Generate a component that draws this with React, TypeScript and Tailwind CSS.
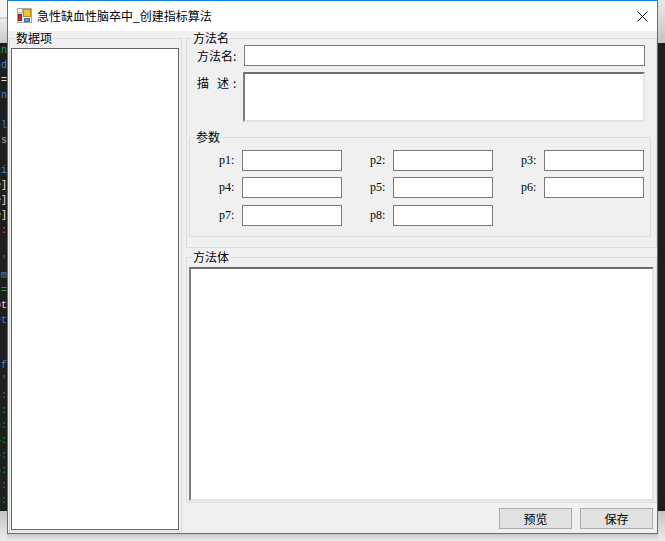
const uiFont = "font-['Noto_Sans_CJK_SC',sans-serif]";

const codeRows: [string, string][] = [
  ["in", "text-[#2ea043]"], ["d", "text-[#3f7fe0]"], ["=", "text-[#e0e0e0]"], ["n", "text-[#3f7fe0]"], ["", ""],
  ["l", "text-[#3f7fe0]"], ["s", "text-[#b5b08a]"], ["", ""], ["i", "text-[#3f7fe0]"], ["e]", "text-[#e0e0e0]"],
  ["e]", "text-[#e0e0e0]"], ["e]", "text-[#e0e0e0]"], [":", "text-[#c9701e]"], ["", ""], ["'", "text-[#2ea043]"],
  ["em", "text-[#3f7fe0]"], ["=", "text-[#2ea043]"], ["ot", "text-[#e0e0e0]"], ["et", "text-[#3f7fe0]"], ["", ""],
  ["", ""], ["rf", "text-[#3f7fe0]"], ["'", "text-[#2ea043]"], ["1:", "text-[#16a016]"], ["2:", "text-[#16a016]"],
  ["3:", "text-[#16a016]"], ["4:", "text-[#16a016]"], ["5:", "text-[#16a016]"], ["6:", "text-[#16a016]"], ["7:", "text-[#16a016]"],
  ["8:", "text-[#16a016]"],
];

const params = [
  ["p1:", "p2:", "p3:"],
  ["p4:", "p5:", "p6:"],
  ["p7:", "p8:"],
];

function AppIcon() {
  return (
    <svg width="16" height="16" viewBox="0 0 16 16" className="block">
      <rect x="0.5" y="0.5" width="14" height="14" fill="#f4f4f4" stroke="#a9a9a9" />
      <path d="M5.5 0.5V5M0.5 5H5.5M0.5 10H3" stroke="#a9a9a9" fill="none" />
      <rect x="6.5" y="1.5" width="7" height="7" fill="#f2c230" stroke="#b98a1c" />
      <rect x="1.5" y="6.5" width="3" height="6" fill="#d8262c" stroke="#8c1a1e" />
      <rect x="7.5" y="10.5" width="5" height="3" fill="#5b9be6" stroke="#3d6fb0" />
    </svg>
  );
}

function GroupBox({ title, className, children }: { title: string; className: string; children?: React.ReactNode }) {
  return (
    <div className={`relative border border-[#dcdcdc] ${className}`}>
      <span className="absolute -top-[8px] left-[5px] bg-[#f0f0f0] px-[1px] text-[12px] leading-[14px] text-black">
        {title}
      </span>
      {children}
    </div>
  );
}

export default function App() {
  return (
    <div className={`flex h-[541px] w-[665px] overflow-hidden bg-[#e6e6e6] ${uiFont}`}>
      {/* Editor behind the dialog, left */}
      <div className="flex w-[7px] shrink-0 flex-col">
        <div className="h-[19px] border-b-2 border-[#d2d2d2] bg-[#f5f5f5]" />
        <div className="h-[24px] bg-gradient-to-b from-[#ececec] to-[#c8c8c8]" />
        <div className="h-[468px] bg-[#1e1e1e]">
          {codeRows.map(([code, color], i) => (
            <div
              key={i}
              className={`flex h-[15px] w-[7px] justify-end overflow-hidden font-['Liberation_Mono',monospace] text-[10px] leading-[15px] ${color}`}
            >
              <span className="whitespace-pre">{code}</span>
            </div>
          ))}
        </div>
        <div className="flex-1 bg-gradient-to-b from-[#c4c4c4] to-[#ececec]" />
      </div>

      <div className="flex w-[651px] shrink-0 flex-col">
        {/* Dialog */}
        <div className="flex h-[534px] flex-col border border-[#1783d8] bg-[#f0f0f0]">
          <div className="flex h-[30px] shrink-0 items-center bg-white pl-[9px] pr-[9px]">
            <AppIcon />
            <span className="ml-[4px] text-[12px] leading-[16px] text-black">急性缺血性脑卒中_创建指标算法</span>
            <svg width="11" height="11" viewBox="0 0 11 11" className="ml-auto block">
              <path d="M0.5 0.5L10.5 10.5M10.5 0.5L0.5 10.5" stroke="#111" strokeWidth="1" fill="none" />
            </svg>
          </div>

          <div className="flex flex-1">
            {/* Left column */}
            <GroupBox title="数据项" className="ml-px mt-[7px] h-[494px] w-[173px] shrink-0 pl-px pt-[9px]">
              <div className="h-[482px] w-[168px] border border-[#646464] bg-white" />
            </GroupBox>

            {/* Right column */}
            <div className="ml-[4px] flex w-[471px] shrink-0 flex-col pt-[7px]">
              <GroupBox title="方法名" className="h-[210px] shrink-0 pt-[6px]">
                <div className="flex h-[21px] items-center">
                  <label className="w-[57px] pl-[10px] text-[12px] leading-[21px] text-black">方法名:</label>
                  <input className="h-[21px] w-[401px] border border-[#7a7a7a] bg-white outline-none" />
                </div>
                <div className="mt-[6px] flex">
                  <label className="w-[56px] whitespace-pre pl-[10px] pt-[3px] text-[12px] leading-[16px] text-black">
                    描   述<span className="ml-[4px]">:</span>
                  </label>
                  <textarea className="h-[50px] w-[402px] resize-none border-2 border-b-[#e3e3e3] border-l-[#7d7d7d] border-r-[#e3e3e3] border-t-[#6e6e6e] bg-white outline-none" />
                </div>
                <GroupBox title="参数" className="ml-[2px] mt-[15px] h-[100px] w-[462px] pt-[12px]">
                  <div className="grid grid-cols-[151px_151px_151px] grid-rows-[27px_28px_21px]">
                    {params.flat().map((p) => (
                      <div key={p} className="flex h-[21px] items-center">
                        <label className="w-[52px] shrink-0 whitespace-nowrap pl-[29px] font-['Liberation_Serif','Noto_Sans_CJK_SC',serif] text-[12px] leading-[21px] text-black">
                          {p}
                        </label>
                        <input className="h-[21px] w-[100px] shrink-0 border border-[#7a7a7a] bg-white outline-none" />
                      </div>
                    ))}
                  </div>
                </GroupBox>
              </GroupBox>

              <GroupBox title="方法体" className="mt-[9px] h-[246px] shrink-0 pl-[2px] pt-[9px]">
                <textarea className="block h-[234px] w-[465px] resize-none border-2 border-b-[#e3e3e3] border-l-[#7d7d7d] border-r-[#e3e3e3] border-t-[#6e6e6e] bg-white outline-none" />
              </GroupBox>

              <div className="mt-[5px] flex justify-end gap-[8px] pr-[4px]">
                <button className="h-[21px] w-[73px] border border-[#adadad] bg-[#e1e1e1] text-[12px] leading-[19px] text-black">
                  预览
                </button>
                <button className="h-[21px] w-[73px] border border-[#adadad] bg-[#e1e1e1] text-[12px] leading-[19px] text-black">
                  保存
                </button>
              </div>
            </div>
          </div>
        </div>
        {/* Shadow under the dialog */}
        <div className="flex-1 bg-gradient-to-b from-[#c8c8c8] to-[#ececec]" />
      </div>

      {/* Behind the dialog, right */}
      <div className="flex w-[7px] shrink-0 flex-col">
        <div className="h-[43px] bg-gradient-to-b from-[#e8e8e8] to-[#c4c4c4]" />
        <div className="h-[468px] bg-[#1e1e1e]" />
        <div className="flex-1 bg-gradient-to-b from-[#c4c4c4] to-[#ececec]" />
      </div>
    </div>
  );
}
